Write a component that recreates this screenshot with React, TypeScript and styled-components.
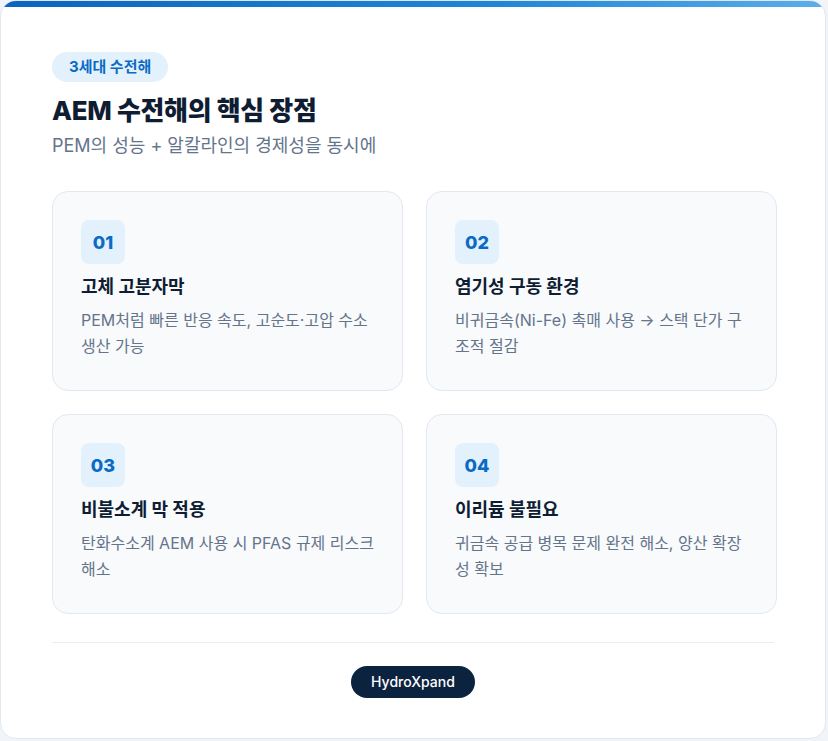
import React from "react";
import styled, { createGlobalStyle } from "styled-components";

const Global = createGlobalStyle`
  html, body { margin: 0; padding: 0; background: #f1f4f8; }
  * { box-sizing: border-box; }
  body { font-family: Inter, "Noto Sans CJK KR", sans-serif; }
`;

const Card = styled.div`
  width: 826px;
  height: 739px;
  background: #fff;
  border: 1px solid #e2e8f0;
  border-radius: 16px;
  overflow: hidden;
  position: relative;
  padding: 51px 51px 0 51px;
  display: flex;
  flex-direction: column;
`;

const TopBar = styled.div`
  position: absolute;
  left: 0; right: 0; top: 0;
  height: 6px;
  background: linear-gradient(90deg, #0b64c0, #1f86d8 60%, #5aaeea);
`;

const Badge = styled.div`
  align-self: flex-start;
  background: #e3f1fd;
  color: #0b6bc4;
  font-weight: 700;
  font-size: 15px;
  height: 30px;
  line-height: 30px;
  padding: 0 17px;
  border-radius: 15px;
`;

const Title = styled.h1`
  margin: 12px 0 0;
  font-size: 26px;
  font-weight: 800;
  color: #0f1d33;
  line-height: 34px;
  letter-spacing: -0.3px;
`;

const Sub = styled.p`
  margin: 5px 0 0;
  font-size: 18px;
  color: #64748b;
  line-height: 26px;
`;

const Grid = styled.div`
  margin-top: 32px;
  display: grid;
  grid-template-columns: 351px 351px;
  grid-auto-rows: 200px;
  column-gap: 23px;
  row-gap: 23px;
`;

const Item = styled.div`
  background: #f8fafc;
  border: 1px solid #e2e8f0;
  border-radius: 16px;
  padding: 28px 28px 0;
  display: flex;
  flex-direction: column;
`;

const Num = styled.div`
  width: 44px;
  height: 44px;
  border-radius: 8px;
  background: #e3f1fd;
  color: #0b6bc4;
  font-weight: 800;
  font-size: 18px;
  display: flex;
  align-items: center;
  justify-content: center;
`;

const ItemTitle = styled.div`
  margin-top: 10px;
  font-size: 18px;
  font-weight: 700;
  color: #0f1d33;
  line-height: 26px;
`;

const Desc = styled.div`
  margin-top: 7px;
  font-size: 16px;
  color: #64748b;
  line-height: 26px;
`;

const Divider = styled.div`
  margin-top: 28px;
  height: 1px;
  background: #e8edf3;
`;

const Footer = styled.div`
  display: flex;
  justify-content: center;
  padding-top: 23px;
`;

const Pill = styled.div`
  background: #0c2340;
  color: #fff;
  font-size: 14px;
  font-weight: 500;
  height: 32px;
  line-height: 32px;
  padding: 0 20px;
  border-radius: 16px;
`;

const items = [
  ["01", "고체 고분자막", "PEM처럼 빠른 반응 속도, 고순도·고압 수소 생산 가능"],
  ["02", "염기성 구동 환경", "비귀금속(Ni-Fe) 촉매 사용 → 스택 단가 구조적 절감"],
  ["03", "비불소계 막 적용", "탄화수소계 AEM 사용 시 PFAS 규제 리스크 해소"],
  ["04", "이리듐 불필요", "귀금속 공급 병목 문제 완전 해소, 양산 확장성 확보"],
];

export default function App() {
  return (
    <>
      <Global />
      <Card>
        <TopBar />
        <Badge>3세대 수전해</Badge>
        <Title>AEM 수전해의 핵심 장점</Title>
        <Sub>PEM의 성능 + 알칼라인의 경제성을 동시에</Sub>
        <Grid>
          {items.map(([n, t, d]) => (
            <Item key={n}>
              <Num>{n}</Num>
              <ItemTitle>{t}</ItemTitle>
              <Desc>{d}</Desc>
            </Item>
          ))}
        </Grid>
        <Divider />
        <Footer>
          <Pill>HydroXpand</Pill>
        </Footer>
      </Card>
    </>
  );
}
